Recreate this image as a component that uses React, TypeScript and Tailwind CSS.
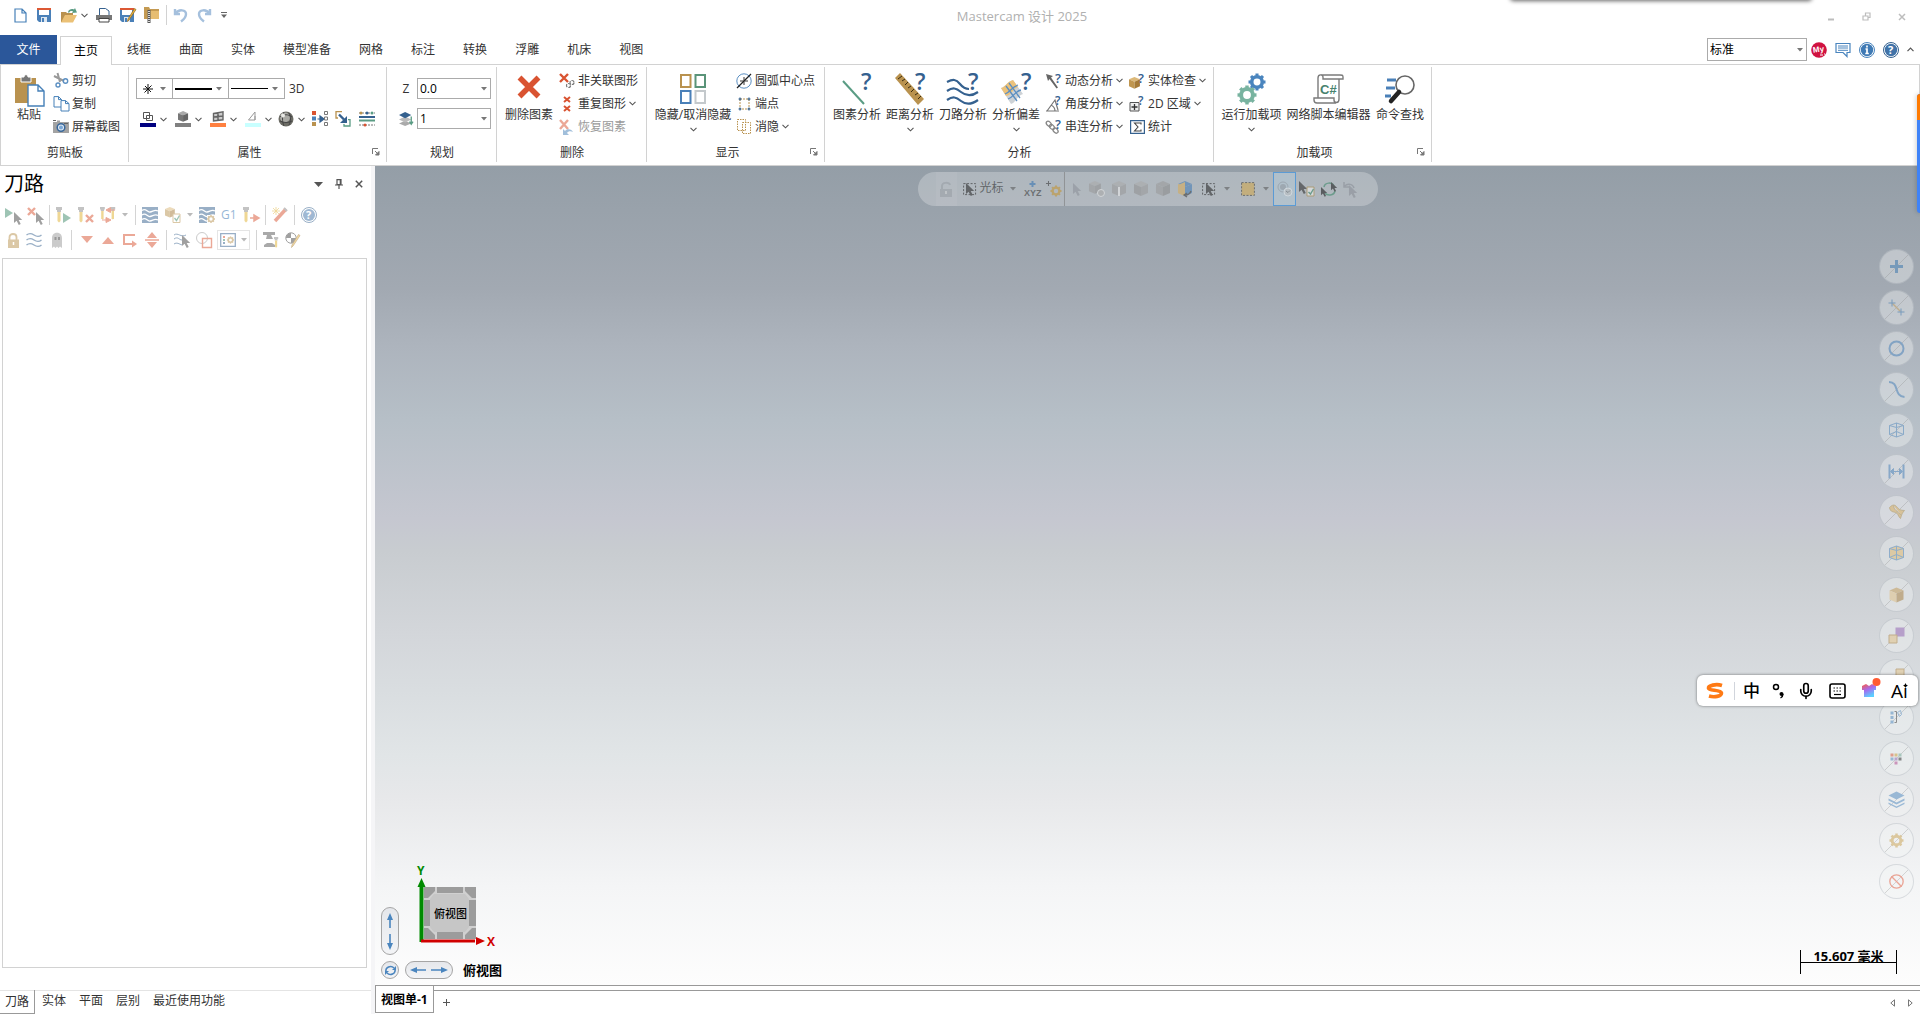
import React from 'react';
import { Ban, Mic } from 'lucide-react';
import clsx from 'clsx';

type SvgProps = { w?: number; h?: number; box?: string; className?: string; children: React.ReactNode };

const Svg = ({ w = 16, h = 16, box, className, children }: SvgProps) => (
  <svg
    width={w}
    height={h}
    viewBox={box ?? `0 0 ${w} ${h}`}
    fill="none"
    aria-hidden="true"
    className={clsx('shrink-0 overflow-visible', className)}
  >
    {children}
  </svg>
);

const Chevron = () => (
  <Svg w={7} h={5}><path d="M.5.8 3.5 3.8 6.5.8" stroke="#555" strokeWidth="1.1" /></Svg>
);

const Caret = ({ color = '#777' }: { color?: string }) => (
  <Svg w={6} h={4}><path d="M0 0h6L3 3.5z" fill={color} /></Svg>
);

const Ask = ({ x, y, size }: { x: number; y: number; size: number }) => (
  <text x={x} y={y} fontSize={size} fontWeight="600" fill="#35618f" fontFamily="Open Sans">?</text>
);

const Gear = ({ x, y, r, color }: { x: number; y: number; r: number; color: string }) => (
  <g transform={`translate(${x} ${y})`} stroke={color}>
    <circle r={r * 0.62} strokeWidth={r * 0.42} />
    {[0, 45, 90, 135, 180, 225, 270, 315].map((a) => (
      <path key={a} d={`M0 ${-r * 0.72}V${-r}`} strokeWidth={r * 0.36} transform={`rotate(${a})`} />
    ))}
  </g>
);

const Arrow = ({ x = 0, y = 0, color = '#444' }: { x?: number; y?: number; color?: string }) => (
  <path transform={`translate(${x} ${y})`} d="M0 0v11l2.6-2.3L4.8 13l1.9-.9L4.7 8h3.5z" fill={color} />
);

const Cube = ({ top = '#999', left = '#888', right = '#777', x = 0, y = 0, s = 1 }) => (
  <g transform={`translate(${x} ${y}) scale(${s})`}>
    <path d="M7 0 14 3 7 6 0 3z" fill={top} />
    <path d="M0 3l7 3v9L0 12z" fill={left} />
    <path d="M14 3 7 6v9l7-3z" fill={right} />
  </g>
);

const Waves = ({ color = '#35618f', w = 16, sw = 1.4 }) => (
  <Svg w={w} h={w} box="0 0 16 16">
    {[3, 8, 13].map((y) => (
      <path key={y} d={`M.5 ${y}c2.5-2 4.5-2 7.5 0s5 2 7.5 0`} stroke={color} strokeWidth={sw} />
    ))}
  </Svg>
);

const Page = ({ w, h }: { w: number; h: number }) => (
  <Svg w={w} h={h} box="0 0 13 15">
    <path d="M1 1h7l4 4v9H1zM8 1v4h4" stroke="#4680b8" strokeWidth="1.2" fill="#fff" />
  </Svg>
);

const Floppy = () => (
  <>
    <path d="M0 1h14v13H2l-2-2z" fill="#4a80b8" />
    <path d="M2 1h10v6H2z" fill="#fff" />
    <path d="M0 0h14v2H0z" fill="#dc5834" />
    <path d="M4 9h6v5H4z" fill="#dce6f0" />
    <path d="M5 10h2v4H5z" fill="#4a80b8" />
  </>
);

const Pencil = () => <path d="M14 1.5 7 12l-1.5 1.5L6 11 12.5.5z" fill="#f0b83c" stroke="#8c6420" strokeWidth=".7" />;

const quickAccess = [
  { name: '新建', icon: <Page w={13} h={15} /> },
  { name: '保存', icon: <Svg w={14} h={15}><Floppy /></Svg> },
  {
    name: '打开',
    icon: (
      <Svg w={17} h={15}>
        <path d="M0 4h5l1 1h6v9H0z" fill="#b9924f" />
        <path d="M4 7h12l-4 7.5H0z" fill="#ebc176" />
        <path d="M7 4c1-3 4-3.5 6-2.5L14 0l2 4.5-5 .5 1-1.5C10 2.5 9 3 8 5z" fill="#5a9c84" />
      </Svg>
    ),
  },
];

const quickAccessMore = [
  {
    name: '打印',
    icon: (
      <Svg w={16} h={15}>
        <path d="M3.5 8V.5h6L13 3v5" stroke="#35618f" fill="#fff" />
        <path d="M0 7h16v5H0z" fill="#777" /><path d="M3 10.500h10V14H3z" fill="#fff" stroke="#444" />
      </Svg>
    ),
  },
  {
    name: '另存为',
    icon: <Svg w={16} h={15}><Floppy /><g transform="translate(2 0)"><Pencil /></g></Svg>,
  },
  {
    name: '压缩',
    icon: (
      <Svg w={15} h={16}>
        <path d="M0 0h5l1 2h9v10H0z" fill="#c49a52" /><path d="M3 4h12v8H3z" fill="#e6bd72" />
        <path d="M5 3v13" stroke="#555" strokeWidth="3" /><path d="M5 4v11" stroke="#fff" strokeWidth="1.5" strokeDasharray="1 1" />
      </Svg>
    ),
  },
];

const tabs = ['线框', '曲面', '实体', '模型准备', '网格', '标注', '转换', '浮雕', '机床', '视图'];

/* ---------- ribbon parts ---------- */

const Group = ({ label, launcher, className, children }: { label: string; launcher?: boolean; className: string; children: React.ReactNode }) => (
  <section className={clsx('relative flex shrink-0 flex-col', className)} aria-label={label}>
    <div className="flex h-[77px] items-start">{children}</div>
    <div className={clsx('text-center', launcher && 'pr-[17px]')}>{label}</div>
    {launcher && (
      <button type="button" aria-label={`${label}选项`} className="absolute right-[7px] bottom-[6px]">
        <Svg w={8} h={8}><path d="M.5 6V.5H6" stroke="#777" /><path d="M3 3l3 3M7 3.5V7H3.5z" stroke="#777" fill="#777" /></Svg>
      </button>
    )}
    <div className="absolute top-0 right-0 h-[95px] w-px bg-[#d2d2d2]" />
  </section>
);

const Big = ({ label, icon, drop, className }: { label: string; icon: React.ReactNode; drop?: boolean; className?: string }) => (
  <button type="button" className={clsx('flex shrink-0 flex-col items-center whitespace-nowrap', className)}>
    <span className="flex h-[39px] items-center justify-center">{icon}</span>
    <span className="h-[19px]">{label}</span>
    {drop && <span className="flex h-2 items-center"><Chevron /></span>}
  </button>
);

type RowItem = { label: string; icon: React.ReactNode; drop?: boolean; off?: boolean };

const Rows = ({ items }: { items: RowItem[] }) => (
  <div className="flex shrink-0 flex-col pt-[2px]">
    {items.map((item) => (
      <button key={item.label} type="button" disabled={item.off} className={clsx('flex h-[23px] items-center gap-[3px] whitespace-nowrap', item.off && 'opacity-50')}>
        <span className="flex w-4 justify-center">{item.icon}</span>
        {item.label}
        {item.drop && <Chevron />}
      </button>
    ))}
  </div>
);

const Combo = ({ label, value, className }: { label: string; value: string; className?: string }) => (
  <span className={clsx('relative flex items-center', className)}>
    <select aria-label={label} className="h-full w-full appearance-none border border-[#ababab] bg-white px-[2px] text-black">
      <option>{value}</option>
    </select>
    <span className="pointer-events-none absolute right-1"><Caret /></span>
  </span>
);

const RedX = ({ s }: { s: number }) => (
  <Svg w={s} h={s} box="0 0 24 24"><path d="M2.5 2.5 21.5 21.5M21.5 2.5 2.5 21.5" stroke="#d95331" strokeWidth="5.5" /></Svg>
);

const clipboardRows: RowItem[] = [
  {
    label: '剪切',
    icon: (
      <Svg w={16} h={15}>
        <path d="M1 3l10 5M4.5 0 7 9" stroke="#999" strokeWidth="2" />
        <circle cx="5" cy="12" r="2" stroke="#5b8fc2" strokeWidth="1.4" /><circle cx="12.5" cy="8" r="2.2" stroke="#5b8fc2" strokeWidth="1.4" />
      </Svg>
    ),
  },
  {
    label: '复制',
    icon: (
      <Svg w={17} h={16}>
        <path d="M1 .6h4.5L8.5 3.5V11H1zM5.5.6v3h3" stroke="#4680b8" fill="#fff" />
        <path d="M8 4.6h4.5l3.5 3V15H8zM12.5 4.6v3H16" stroke="#4680b8" fill="#fff" />
      </Svg>
    ),
  },
  {
    label: '屏幕截图',
    icon: (
      <Svg w={16} h={13}>
        <path d="M0 2h4V.5h3V2h9v11H0z" fill="#a3a3a3" /><path d="M0 0h3v1H0zM11 3h4v1h-4z" fill="#666" />
        <circle cx="8" cy="7.5" r="3.8" fill="#dfe8f2" stroke="#38679a" strokeWidth="1.5" /><circle cx="8" cy="7.5" r="2" fill="#7aa7d6" />
      </Svg>
    ),
  },
];

const colorTools = [
  { name: '线框颜色', bar: 'bg-[#000080]', icon: <path d="M1.5 1.5h6v6h-6zM4.5 4.5h6v5h-6z" stroke="#555" /> },
  { name: '实体颜色', bar: 'bg-[#808080]', icon: <Cube top="#aaa" left="#777" right="#666" x={1} s={0.72} /> },
  { name: '曲面颜色', bar: 'bg-[#ff8040]', icon: <path d="M1.5 2.5 11 .8v8L1.5 10zM6 1.8v7.5M1.5 6 11 5" stroke="#666" strokeWidth="1.4" fill="#ccc" /> },
  { name: '网格颜色', bar: 'bg-[#c8ffff]', icon: <path d="M8 1v8H1.5zM8 5v4" stroke="#999" /> },
];

const deleteRows: RowItem[] = [
  {
    label: '非关联图形',
    icon: (
      <Svg>
        <path d="M1 1l8 8M9 1 1 9" stroke="#d95331" strokeWidth="2.4" />
        <circle cx="9.5" cy="12.5" r="2" stroke="#777" strokeWidth="1.2" strokeDasharray="3 1" /><circle cx="13" cy="9.5" r="2" stroke="#777" strokeWidth="1.2" strokeDasharray="3 1" />
      </Svg>
    ),
  },
  { label: '重复图形', drop: true, icon: <Svg w={8} h={16}><path d="M1 1l6 5M7 1 1 6M1 10l6 5M7 10l-6 5" stroke="#d95331" strokeWidth="2" /></Svg> },
  {
    label: '恢复图素',
    off: true,
    icon: (
      <Svg>
        <path d="M1 1l8 9M9 1 1 10" stroke="#d95331" strokeWidth="2.4" />
        <path d="M4 10v6h6l-2-2c1-2 4-2 6-1-1-3-6-4-8-1z" fill="#4680b8" />
      </Svg>
    ),
  },
];

const displayRows: RowItem[] = [
  {
    label: '圆弧中心点',
    icon: (
      <Svg>
        <circle cx="8" cy="8" r="7.2" stroke="#5b8fc2" /><path d="M8 4v8M4 8h8" stroke="#999" strokeWidth="2" /><path d="M1 15 15 1" stroke="#222" strokeWidth="1.3" />
      </Svg>
    ),
  },
  {
    label: '端点',
    icon: (
      <Svg w={13} h={14}>
        <path d="M2 2h9v10H2z" stroke="#b9924f" strokeDasharray="2 1" />
        <path d="M2 .5v3M.5 2h3M11 .5v3M9.5 2h3M2 10.500v3M.5 12h3M11 10.500v3M9.5 12h3" stroke="#35618f" strokeWidth="1.2" />
      </Svg>
    ),
  },
  { label: '消隐', drop: true, icon: <Svg w={14} h={15}><path d="M.5.5h8v11h-8zM5.5 3.5h8v11h-8z" stroke="#b9924f" strokeDasharray="1.5 1" /></Svg> },
];

const analyzeRowsA: RowItem[] = [
  { label: '动态分析', drop: true, icon: <Svg><path d="M0 1l7 2-2 1.500 7 10-1.500 1L3.500 6 2 8z" fill="#666" /><Ask x={9} y={10} size={13} /></Svg> },
  { label: '角度分析', drop: true, icon: <Svg><path d="M0 15h13M1 15 9 4l3 10M5 9c2 1 4 3 4 6" stroke="#777" strokeWidth="1.2" /><Ask x={9} y={9} size={12} /></Svg> },
  {
    label: '串连分析',
    drop: true,
    icon: (
      <Svg>
        <g stroke="#888" strokeWidth="1.3" transform="rotate(45 6 8)"><ellipse cx="1.5" cy="8" rx="3" ry="2" /><ellipse cx="6" cy="8" rx="3" ry="2" /><ellipse cx="11" cy="8" rx="3" ry="2" /></g>
        <Ask x={9} y={10} size={13} />
      </Svg>
    ),
  },
];

const analyzeRowsB: RowItem[] = [
  { label: '实体检查', drop: true, icon: <Svg><Cube top="#dcb878" left="#c09650" right="#a57a38" y={4} s={0.78} /><Ask x={9} y={10} size={13} /></Svg> },
  { label: '2D 区域', drop: true, icon: <Svg><path d="M1 6.500h9V15H1z" stroke="#555" fill="#eee" /><path d="M5.500 8v6M2.500 11h6" stroke="#333" strokeWidth="1.3" /><Ask x={9} y={9} size={12} /></Svg> },
  {
    label: '统计',
    icon: (
      <Svg w={15} h={14}>
        <path d="M.6.6h13.800v12.800H.6z" stroke="#35618f" strokeWidth="1.2" /><path d="M11 4.500V3H4.500L8 7l-3.500 4H11V9.500" stroke="#444" strokeWidth="1.1" />
      </Svg>
    ),
  },
];

const Ribbon = () => (
  <div className="flex shrink-0 overflow-hidden border border-[#d2d2d2] pt-[2px] pb-[3px]">
    <Group label="剪贴板" className="w-32">
      <Big
        label="粘贴"
        className="ml-3 w-8"
        icon={
          <Svg w={29} h={33} className="mt-2">
            <path d="M0 4h21v25H0z" fill="#b9924f" /><path d="M6 3h3c0-3 4-3 4 0h3v5H6z" fill="#777" stroke="#fff" />
            <path d="M13 11h10l6 6v15H13zM23 11v6h6" stroke="#4680b8" strokeWidth="1.4" fill="#fff" />
          </Svg>
        }
      />
      <div className="ml-2"><Rows items={clipboardRows} /></div>
    </Group>

    <Group label="属性" launcher className="w-[258px]">
      <div className="flex flex-col pt-[11px] pl-[7px]">
        <div className="flex h-[21px] items-center">
          <button type="button" aria-label="点样式" className="flex h-full w-[37px] items-center justify-between border border-[#ababab] px-[6px]">
            <Svg w={10} h={10}><path d="M5 0v10M0 5h10M1.5 8.5l7-7M2 2l6 6" stroke="#111" /></Svg>
            <Caret />
          </button>
          <button type="button" aria-label="线型" className="flex h-full w-14 items-center justify-between border-y border-r border-[#ababab] px-[2px]">
            <span className="h-[2px] w-[37px] bg-black" /><span className="pr-1"><Caret /></span>
          </button>
          <button type="button" aria-label="线宽" className="flex h-full w-14 items-center justify-between border-y border-r border-[#ababab] px-[2px]">
            <span className="h-px w-[37px] bg-black" /><span className="pr-1"><Caret /></span>
          </button>
          <button type="button" className="ml-1">3D</button>
        </div>
        <div className="mt-[11px] flex h-[18px] items-center gap-[6px] pl-1">
          {colorTools.map((tool) => (
            <button key={tool.name} type="button" aria-label={tool.name} className="flex w-[29px] items-center gap-1">
              <span className="flex flex-col items-center">
                <Svg w={12} h={12}>{tool.icon}</Svg>
                <span className={clsx('h-1 w-4', tool.bar)} />
              </span>
              <Chevron />
            </button>
          ))}
          <button type="button" aria-label="材料" className="-ml-[2px] flex items-center gap-1">
            <Svg>
              <circle cx="8" cy="8" r="7.5" fill="#6b6b64" /><circle cx="7" cy="6.5" r="5" fill="#a9a9a4" />
              <path d="M2 6c4-3 8-3 12 0M2 10c4 2 8 2 12 0M6 1c-2 5-2 9 0 14M11 2c2 4 2 8 0 12" stroke="#444" /><circle cx="5" cy="4.5" r="2" fill="#e8e8e4" />
            </Svg>
            <Chevron />
          </button>
          <button type="button" aria-label="设置全部" className="ml-px">
            <Svg w={17}>
              <path d="M0 0h4v4H0z" fill="#d95331" /><path d="M0 5.5h4v4H0z" fill="#4a80b8" /><path d="M0 11h4v4H0z" fill="#b9924f" />
              <path d="M5.5 8H10M8 5l4 3-4 3z" stroke="#35618f" strokeWidth="1.2" fill="#35618f" />
              <path d="M12.5.5h3v3h-3zM12.5 6h3v3h-3zM12.5 11.5h3v3h-3z" stroke="#777" />
            </Svg>
          </button>
          <button type="button" aria-label="匹配属性">
            <Svg w={16}>
              <path d="M7 .7H1V7h2" stroke="#b9924f" strokeWidth="1.3" /><path d="M13 8.7h2V15H9v-2" stroke="#5a9c84" strokeWidth="1.3" />
              <path d="m4 3.500 5 5" stroke="#35618f" strokeWidth="2.4" /><path d="M12 5v7H5z" fill="#35618f" />
            </Svg>
          </button>
          <button type="button" aria-label="线条属性" className="ml-[2px]">
            <Svg w={16}>
              <path d="M0 2h16M0 14h16" stroke="#777" strokeDasharray="2 1" /><path d="M0 6h16" stroke="#35618f" strokeWidth="2" /><path d="M0 9.5h16" stroke="#5a9c84" strokeWidth="2" />
              <circle cx="2" cy="2" r="1.5" fill="#b9924f" /><circle cx="8" cy="2" r="1.5" fill="#35618f" /><circle cx="13" cy="2" r="1.5" fill="#5a9c84" /><circle cx="6" cy="14" r="1.5" fill="#d95331" />
            </Svg>
          </button>
        </div>
      </div>
    </Group>

    <Group label="规划" className="w-[110px]">
      <div className="flex flex-col gap-[9px] pt-[11px] pl-3">
        <div className="flex h-[21px] items-center">
          <span className="w-[18px] pr-1 text-center">Z</span>
          <Combo label="Z 深度" value="0.0" className="h-full w-[74px]" />
        </div>
        <div className="flex h-[21px] items-center">
          <span className="w-[18px]">
            <Svg w={14} h={14} box="0 0 16 16">
              <path d="M7 10 0 13l7 3 7-3z" fill="#aaa" /><path d="M7 5 0 8.5 7 12l7-3.500z" fill="#bbb" /><path d="M7 0 0 3.5 7 7l7-3.500z" fill="#35618f" />
              <path d="M14 5v9M12 11l2 3 2-3" stroke="#5a9c84" strokeWidth="1.5" />
            </Svg>
          </span>
          <Combo label="层别" value="1" className="h-full w-[74px]" />
        </div>
      </div>
    </Group>

    <Group label="删除" className="w-[150px]">
      <Big label="删除图素" icon={<RedX s={24} />} className="ml-2 w-12" />
      <div className="ml-[6px]"><Rows items={deleteRows} /></div>
    </Group>

    <Group label="显示" launcher className="w-[178px]">
      <Big
        label="隐藏/取消隐藏"
        drop
        className="ml-[7px] w-[78px]"
        icon={
          <Svg w={26} h={30} className="mt-1">
            <path d="M1 1h9.5v12H1z" stroke="#b9924f" strokeWidth="2" /><path d="M15.5 1H25v12h-9.500z" stroke="#5a9479" strokeWidth="2" />
            <path d="M1 17h9.500v12H1z" stroke="#4a80b8" strokeWidth="2" /><path d="M15.500 17H25v12h-9.500z" stroke="#c4c9cc" strokeWidth="2" />
          </Svg>
        }
      />
      <div className="ml-1"><Rows items={displayRows} /></div>
    </Group>

    <Group label="分析" className="w-[389px]">
      <div className="flex gap-[5px] pl-2">
        <Big label="图素分析" className="w-12" icon={<Svg w={32} h={32} className="mt-1"><path d="M2 8 23 31" stroke="#5a9c84" strokeWidth="2" /><Ask x={20} y={17} size={23} /></Svg>} />
        <Big
          label="距离分析"
          drop
          className="w-12"
          icon={
            <Svg w={32} h={32} className="mt-1">
              <path d="M1 5 6 0l24 26-6 6z" fill="#b9924f" /><path d="M8 3 4 6m7 0-3 2m6 1-3 3m6 1-3 2m6 1-3 3m7 1-3 2m6 1-3 3" stroke="#3a2c10" />
              <Ask x={21} y={17} size={23} />
            </Svg>
          }
        />
        <Big
          label="刀路分析"
          className="w-12"
          icon={
            <Svg w={34} h={32} className="mt-1">
              <path d="M1 9c6-3 9-3 13 2s8 5 9 5M1 18c6-4 9-3 14 1s10 5 17 0M1 27c6-4 9-3 14 1s10 4 17-1" stroke="#35618f" strokeWidth="2.2" />
              <Ask x={22} y={17} size={23} />
            </Svg>
          }
        />
        <Big
          label="分析偏差"
          drop
          className="w-12"
          icon={
            <Svg w={33} h={32} className="mt-1">
              <path d="M1 15c5-1 5-6 12-8l10 14c-6 2-7 8-12 10z" fill="#cdd2d6" /><path d="M1 15c5-1 5-6 12-8l5 7c-6 2-6 8-12 9z" fill="#ecc27a" />
              <path d="M5 21c6-2 6-7 13-9M8 26c6-2 7-8 13-9M6 13l11 15M9 10l11 15" stroke="#5b8fc2" strokeWidth="1.3" />
              <Ask x={21} y={17} size={23} />
            </Svg>
          }
        />
        <div className="ml-px flex gap-[6px]">
          <Rows items={analyzeRowsA} />
          <Rows items={analyzeRowsB} />
        </div>
      </div>
    </Group>

    <Group label="加载项" launcher className="w-[218px]">
      <div className="flex gap-1 pl-[7px]">
        <Big label="运行加载项" drop className="w-[61px]" icon={<Svg w={30} h={32} className="mt-1"><Gear x={20} y={9} r={8.5} color="#4a85be" /><Gear x={10} y={22} r={9.5} color="#78b3a0" /></Svg>} />
        <Big
          label="网络脚本编辑器"
          className="w-[85px]"
          icon={
            <Svg w={31} h={30} className="mt-1">
              <path d="M5 24V4c0-4 5-4 5-1v2h20V3c0-2-1-2-3-2H8M26 5v20c0 5-5 4-5 1v-2H1v2c0 2 1 3 3 3h19" stroke="#7b7b7b" strokeWidth="1.4" />
              <text x="7" y="20" fontSize="13" fontWeight="700" fill="#47836e" fontFamily="Liberation Sans">C#</text>
            </Svg>
          }
        />
        <Big
          label="命令查找"
          className="w-[50px]"
          icon={
            <Svg w={30} h={30} className="mt-1">
              <path d="M2 6h9M1 14h9M0 22h6" stroke="#4a80b8" strokeWidth="3" />
              <circle cx="20" cy="11" r="9" stroke="#666" strokeWidth="1.6" fill="#fff" /><path d="m14 18-8 9" stroke="#222" strokeWidth="4.5" strokeLinecap="round" />
            </Svg>
          }
        />
      </div>
    </Group>
  </div>
);

const Header = () => (
  <header className="shrink-0">
    <div className="relative flex h-[35px] items-start justify-between">
      <div className="flex h-[30px] shrink-0 items-center pl-[14px]">
        <div className="flex items-center gap-[10px]">
          {quickAccess.map((q) => <button key={q.name} type="button" aria-label={q.name}>{q.icon}</button>)}
        </div>
        <button type="button" aria-label="最近文件" className="mr-2 ml-[3px]"><Chevron /></button>
        <div className="flex items-center gap-2">
          {quickAccessMore.map((q) => <button key={q.name} type="button" aria-label={q.name}>{q.icon}</button>)}
        </div>
        <span className="mx-[7px] h-5 w-px bg-[#d2d2d2]" />
        <button type="button" aria-label="撤销"><Svg w={14} h={14}><path d="M1 1v5h5M1.5 5.5C5 .5 12 2 12 6c0 4-3 6-5 7.500" stroke="#a5c0dd" strokeWidth="2.4" /></Svg></button>
        <button type="button" aria-label="重做" className="ml-[9px]"><Svg w={14} h={14}><path d="M13 1v5H8M12.5 5.5C9 .5 2 2 2 6c0 4 3 6 5 7.500" stroke="#a5c0dd" strokeWidth="2.4" /></Svg></button>
        <button type="button" aria-label="自定义" className="ml-[10px]"><Svg w={6} h={6}><path d="M0 .5h6" stroke="#666" /><path d="M0 2.500h6L3 6z" fill="#666" /></Svg></button>
      </div>
      <h1 className="flex-1 pr-[10px] text-center text-[13px] leading-[33px] whitespace-nowrap text-[#b0b0b0]">Mastercam 设计 2025</h1>
      <div className="flex h-[33px] items-center gap-[27px] pr-[14px] text-[#bdbdbd]">
        <button type="button" aria-label="最小化"><Svg w={8} h={8}><path d="M1 6.500h6" stroke="currentColor" strokeWidth="2" /></Svg></button>
        <button type="button" aria-label="还原"><Svg w={9} h={9}><path d="M1 4h5v4H1zM3.500 4V1H8v4.500H6" stroke="currentColor" strokeWidth="1.2" /></Svg></button>
        <button type="button" aria-label="关闭"><Svg w={8} h={8}><path d="m1 1 6 6M7 1 1 7" stroke="currentColor" strokeWidth="1.5" /></Svg></button>
      </div>
      <div className="absolute -top-2 right-[108px] h-2 w-[302px] rounded-b bg-gray-300 shadow-[0_1px_4px_rgba(0,0,0,.6)]" />
    </div>

    <div className="flex h-[29px] items-stretch">
      <button type="button" className="mr-[3px] w-[57px] bg-[#2b579a] text-white">文件</button>
      <button type="button" className="relative z-10 mt-px mr-px -mb-px border border-b-0 border-[#d2d2d2] bg-white px-[13px] text-black">主页</button>
      {tabs.map((t) => <button key={t} type="button" className="px-[14px] whitespace-nowrap">{t}</button>)}
      <div className="ml-auto flex items-center gap-2 pr-[5px]">
        <Combo label="界面配置" value="标准" className="mr-[-4px] h-[23px] w-[100px]" />
        <button type="button" aria-label="My Mastercam">
          <Svg><circle cx="8" cy="8" r="7.8" fill="#d01240" /><text x="2" y="10" fontSize="8" fontWeight="700" fill="#fff" fontFamily="Liberation Sans" transform="rotate(-8 8 8)">My</text><path d="M9 13h3M13 12h1" stroke="#fff" /></Svg>
        </button>
        <button type="button" aria-label="反馈"><Svg><path d="M1 1.500h14v9h-3v4l-4-4H1z" stroke="#4a85be" strokeWidth="1.2" /><path d="M3 4h10M3 6h10M3 8.300h10" stroke="#4a85be" /></Svg></button>
        <button type="button" aria-label="信息"><Svg><circle cx="8" cy="8" r="7.5" stroke="#4a85be" /><circle cx="8" cy="8" r="6.2" fill="#3f7ab5" /><path d="M8 3.500v2M6.500 7H8v4.500M6.300 11.500h3.500" stroke="#fff" strokeWidth="1.7" /></Svg></button>
        <button type="button" aria-label="帮助"><Svg><circle cx="8" cy="8" r="7.5" stroke="#35618f" /><circle cx="8" cy="8" r="6.2" fill="#4173a8" /><text x="5" y="12" fontSize="11" fontWeight="700" fill="#fff" fontFamily="Open Sans">?</text></Svg></button>
        <button type="button" aria-label="折叠功能区" className="pr-px"><Svg w={7} h={5}><path d="M.5 4.200 3.500 1.200 6.500 4.200" stroke="#555" strokeWidth="1.2" /></Svg></button>
      </div>
    </div>
    <Ribbon />
  </header>
);

/* ---------- toolpath manager ---------- */

const Tool = ({ x = 0 }: { x?: number }) => (
  <g transform={`translate(${x} 0)`}><path d="M0 0h6v3H5v2H1V3H0z" fill="#888" /><path d="M1.500 5h3v9l-1.500 1.500L1.500 14z" fill="#e0b02c" /></g>
);

const WaveBlock = ({ gear }: { gear?: boolean }) => (
  <Svg>
    <path d="M0 0h16v16H0z" fill="#35618f" />
    <path d="M0 3.500c4-3 5 2 8 1.500s5-3 8-1M0 8c4-3 5 2 8 1.500S13 6.500 16 8.500M0 12.500c4-3 5 2 8 1.500s5-3 8-1" stroke="#fff" strokeWidth="1.3" />
    {gear && <><path d="M8 8h8v8H8z" fill="#fff" /><Gear x={12} y={12} r={4} color="#b9924f" /></>}
  </Svg>
);

const Split = () => <span className="h-5 w-px bg-[#aaa]" />;

const PanelButton = ({ name, children, className }: { name: string; children: React.ReactNode; className?: string }) => (
  <button type="button" aria-label={name} className={clsx('flex shrink-0 items-center', className)}>{children}</button>
);

const ToolpathPanel = () => (
  <aside className="flex w-[371px] shrink-0 flex-col">
    <div className="flex h-9 items-center justify-between pr-2 pl-1">
      <h2 className="text-[20px] leading-9 text-black">刀路</h2>
      <div className="flex items-center gap-3">
        <button type="button" aria-label="菜单"><Svg w={9} h={5}><path d="M0 0h9L4.500 5z" fill="#555" /></Svg></button>
        <button type="button" aria-label="固定"><Svg w={8} h={10}><path d="M2 .6h4v5H2zM5.300 1v4M0 6h8M4 6v4" stroke="#555" strokeWidth="1.2" /></Svg></button>
        <button type="button" aria-label="关闭面板"><Svg w={8} h={8}><path d="m.8.8 6.400 6.400M7.200.8.8 7.200" stroke="#555" strokeWidth="1.5" /></Svg></button>
      </div>
    </div>
    <div className="flex h-[26px] items-center gap-[6px] pl-[5px] opacity-50">
      <PanelButton name="选择全部"><Svg w={16}><path d="M0 1v10l8-5z" fill="#3f8a6c" /><Arrow x={9} y={5} /></Svg></PanelButton>
      <PanelButton name="取消选择"><Svg w={16}><path d="m1 1 7 7M8 1 1 8" stroke="#d95331" strokeWidth="2.4" /><Arrow x={9} y={5} /></Svg></PanelButton>
      <Split />
      <PanelButton name="重新生成"><Svg w={16}><Tool /><path d="M7 6v10l8-5z" fill="#3f8a6c" /></Svg></PanelButton>
      <PanelButton name="删除刀路"><Svg w={16}><Tool /><path d="m8 8 7 7M15 8l-7 7" stroke="#d95331" strokeWidth="2.4" /></Svg></PanelButton>
      <PanelButton name="移动" className="mr-px gap-[6px]">
        <Svg w={16}><g transform="scale(.8)"><Tool /><Tool x={13} /></g><path d="M9 3h6M10.500.500v5L6 3zM2 13h5M6 10.500v5l5-2.500z" stroke="#d95331" fill="#d95331" /></Svg>
        <Caret />
      </PanelButton>
      <Split />
      <PanelButton name="刀路模拟"><WaveBlock /></PanelButton>
      <PanelButton name="实体验证" className="ml-px gap-[6px]">
        <Svg w={16}><Cube top="#dcb878" left="#b9924f" right="#a57a38" s={0.7} /><path d="M8 7h7v8.500H8z" stroke="#b9924f" fill="#fff" /><path d="m9.500 11 2 2.500 3-5" stroke="#3f8a6c" strokeWidth="1.3" /></Svg>
        <Caret />
      </PanelButton>
      <PanelButton name="后处理设置"><WaveBlock gear /></PanelButton>
      <PanelButton name="后处理" className="text-[12px] text-[#2f70b0]">G1</PanelButton>
      <PanelButton name="省时高效加工"><Svg w={16}><Tool /><path d="M7 11h5M11 8v6l5-3z" stroke="#d95331" fill="#d95331" strokeWidth="1.5" /></Svg></PanelButton>
      <Split />
      <PanelButton name="向导"><Svg w={16}><path d="M3 14 14 2" stroke="#d95331" strokeWidth="3.5" /><path d="m12 1 3 3" stroke="#888" strokeWidth="2" /><path d="M4 0v8M0 4h8M1 1l6 6M7 1 1 7" stroke="#e0b02c" strokeWidth=".8" /></Svg></PanelButton>
      <Split />
      <PanelButton name="面板帮助"><Svg><circle cx="8" cy="8" r="7.5" stroke="#35618f" /><circle cx="8" cy="8" r="6" fill="#4173a8" /><text x="5" y="12" fontSize="11" fontWeight="700" fill="#fff" fontFamily="Open Sans">?</text></Svg></PanelButton>
    </div>
    <div className="flex h-6 items-center gap-[6px] pl-[6px] opacity-50">
      <PanelButton name="锁定"><Svg w={14} h={15}><path d="M3.500 7V4c0-4 7-4 7 0v3" stroke="#b9924f" strokeWidth="1.8" /><path d="M2 6.500h11V15H2z" fill="#b9924f" /><path d="M7.500 9v3" stroke="#fff" strokeWidth="1.5" /></Svg></PanelButton>
      <PanelButton name="显示刀路"><Waves /></PanelButton>
      <PanelButton name="隐藏选择" className="ml-px"><Svg w={16}><path d="M3 16V6c0-7 10-7 10 0v10l-2-1.500L9.500 16 8 14.500 6.500 16 5 14.500z" fill="#999" /><path d="M5.500 5h2v3h-2zM9 5h2v3H9z" fill="#333" /></Svg></PanelButton>
      <Split />
      <PanelButton name="下移" className="ml-[2px]"><Svg w={14}><path d="M1 4h12L7 11z" fill="#d95331" /></Svg></PanelButton>
      <PanelButton name="上移"><Svg w={16}><path d="M2 12h12L8 5z" fill="#d95331" /></Svg></PanelButton>
      <PanelButton name="插入位置"><Svg w={16}><path d="M13 3H2v9h8" stroke="#d95331" strokeWidth="2" /><path d="M10 8.500v7l5-3.500z" fill="#d95331" /></Svg></PanelButton>
      <PanelButton name="滚动"><Svg w={16}><path d="M1 8h14" stroke="#d95331" strokeWidth="1.5" /><path d="M3 6h10L8 0zM3 10h10l-5 6z" fill="#d95331" /></Svg></PanelButton>
      <Split />
      <PanelButton name="仅显示已选" className="ml-px"><Svg w={16}><path d="M0 3c4-3 7 3 12 0M0 7c4-3 5 1 8 1M0 12c3-2 5 0 8 1" stroke="#35618f" /><Arrow x={8} y={3} /></Svg></PanelButton>
      <PanelButton name="仅显示关联"><Svg w={16}><circle cx="6" cy="6" r="5.5" stroke="#999" /><path d="M6.500 6.500h9V15.500h-9z" stroke="#d95331" strokeWidth="1.4" /></Svg></PanelButton>
      <PanelButton name="显示选项" className="-ml-px h-5 gap-[5px] border border-[#ccc] px-[2px]">
        <Svg w={16} h={14}><path d="M.7.7h14.600v12.600H.7z" stroke="#35618f" strokeWidth="1.3" /><path d="M3 3h2v2H3z" fill="#d95331" /><path d="M3 6h2v2H3z" fill="#3f8a6c" /><path d="M3 9h2v2H3z" fill="#35618f" /><Gear x={10.5} y={7} r={3.6} color="#b9924f" /></Svg>
        <Caret />
      </PanelButton>
      <Split />
      <PanelButton name="机床"><Svg w={16}><path d="M0 0h12v3H8l2 4H3l1-4H0zM1 15h11v-2l-3-2H4l-3 2z" fill="#555" /><g transform="translate(11 5) scale(.7)"><Tool /></g></Svg></PanelButton>
      <PanelButton name="编辑"><Svg w={17}><circle cx="6" cy="6" r="5.2" stroke="#444" /><path d="M6 1v5H1c0-3 2-5 5-5zM6 6h5c0 3-2 5-5 5z" fill="#444" /><g transform="translate(1 2)"><Pencil /></g></Svg></PanelButton>
    </div>
    <div className="mt-[6px] mr-1 ml-[2px] flex-1 border border-[#d2d2d2]" />
    <nav className="mt-[22px] flex h-6 border-t border-[#e4e4e4]">
      <button type="button" className="-mt-px border border-l-0 border-t-0 border-[#999] px-[5px] pt-px pb-px">刀路</button>
      {['实体', '平面', '层别', '最近使用功能'].map((t) => (
        <button key={t} type="button" className="ml-px px-[6px] pb-[3px]">{t}</button>
      ))}
    </nav>
  </aside>
);

/* ---------- graphics view ---------- */

const SelectionBar = () => (
  <div className="absolute top-[6px] left-1/2 flex h-[34px] -translate-x-1/2 items-center rounded-full bg-white/25 pr-[19px] pl-[18px]">
    <div className="flex h-full items-center opacity-55">
      <PanelButton name="锁定选择" className="mr-[6px] h-full bg-white/10 px-1"><Svg w={13} h={15}><path d="M2 7V4c0-4 7-4 8-1" stroke="#9a9fa6" strokeWidth="2" /><path d="M0 7h12v8H0z" fill="#9a9fa6" /><path d="M6 9v3" stroke="#ddd" strokeWidth="1.5" /></Svg></PanelButton>
      <PanelButton name="光标选择" className="gap-[3px] text-[#222]">
        <Svg w={14} h={14}><path d="M.6 1.600h12v11h-12z" stroke="#222" strokeDasharray="2 1.5" /><Arrow x={3} y={1} color="#222" /></Svg>
        <span className="pb-[2px]">光标</span>
      </PanelButton>
      <span className="ml-[6px]"><Caret color="#555" /></span>
      <PanelButton name="输入坐标" className="ml-2"><Svg w={17}><path d="M8.500 0v6M5.500 3h6" stroke="#2f70b0" strokeWidth="2" /><text x="0" y="15" fontSize="9" fontWeight="600" fill="#333" fontFamily="Liberation Sans">XYZ</text></Svg></PanelButton>
      <PanelButton name="捕捉设置" className="ml-[5px]"><Svg w={16}><path d="M2.500 0v5M0 2.500h5" stroke="#333" /><Gear x={10} y={10} r={5.5} color="#c4922c" /></Svg></PanelButton>
      <span className="mx-[2px] h-full w-px bg-[#777]" />
      <div className="flex items-center gap-[6px] pl-1">
        <PanelButton name="选择"><Svg w={12} h={14}><Arrow x={2} y={1} color="#8b9098" /></Svg></PanelButton>
        <PanelButton name="实体选择"><Svg w={16}><Cube top="#aaa" left="#999" right="#909090" s={0.85} /><circle cx="12" cy="12" r="3.5" fill="#aaa" stroke="#eee" /></Svg></PanelButton>
        <PanelButton name="边缘选择"><Svg w={16}><Cube top="#aaa" left="#999" right="#999" x={1} /><path d="M8 6v9" stroke="#eee" strokeWidth="2" /></Svg></PanelButton>
        <PanelButton name="面选择"><Svg w={16}><Cube top="#aaa" left="#909090" right="#999" x={1} /></Svg></PanelButton>
        <PanelButton name="主体选择"><Svg w={16}><Cube top="#999" left="#999" right="#888" x={1} /></Svg></PanelButton>
        <PanelButton name="背面选择"><Svg w={17}><Cube top="#3f7ab5" left="#e0b050" right="#3f7ab5" x={1} /><path d="m8 1-7 3v8l7 3z" fill="#d8ab55" /><path d="M14 10c-1 3-3 4-6 4m2-2-3 2 3 2" stroke="#333" strokeWidth="1.3" /></Svg></PanelButton>
      </div>
      <PanelButton name="选择方式" className="ml-2"><Svg w={14} h={14}><path d="M.6 1.600h12v11h-12z" stroke="#222" strokeDasharray="2 1.5" /><Arrow x={4} y={1} color="#222" /></Svg></PanelButton>
      <span className="ml-2"><Caret color="#555" /></span>
      <PanelButton name="窗口选择" className="ml-[11px]"><Svg w={14} h={14}><path d="M.6.6h12.800v12.800H.6z" fill="#d2a748" stroke="#333" strokeDasharray="2 1.5" /></Svg></PanelButton>
      <span className="ml-2"><Caret color="#555" /></span>
    </div>
    <PanelButton name="选择验证" className="ml-1 h-full border border-[#5b9bd5] bg-sky-200/20 px-[3px]">
      <Svg w={15} className="opacity-50"><circle cx="6" cy="6" r="5" stroke="#8b9098" /><circle cx="6" cy="6" r="3" fill="#8b9098" /><circle cx="11" cy="11" r="4" fill="#bbb" stroke="#eee" /><path d="M9 10l2 1.500 2-2" stroke="#555" /></Svg>
    </PanelButton>
    <div className="flex items-center gap-[5px] pl-[3px] opacity-60">
      <PanelButton name="选择清单"><Svg w={17}><Arrow color="#333" /><path d="M8 6h7v9H8z" stroke="#a98b4a" fill="#eee" /><path d="m9.500 11 2 2 3-5" stroke="#3f8a6c" strokeWidth="1.4" /></Svg></PanelButton>
      <PanelButton name="反选"><Svg w={17}><path d="M3 6c1-5 8-5 10-1M14 10c-1 5-8 5-10 2" stroke="#3f8a6c" strokeWidth="1.5" /><g transform="translate(0 6) scale(.75)"><Arrow color="#222" /></g><g transform="translate(10 1) scale(.75)"><Arrow color="#222" /></g></Svg></PanelButton>
      <PanelButton name="取消选择全部"><Svg w={16}><path d="M1 1v5h5M1.500 5C5 2 10 3 11 7" stroke="#8b9098" strokeWidth="1.5" /><Arrow x={6} y={4} color="#8b9098" /></Svg></PanelButton>
    </div>
  </div>
);

const boxWire = <path d="M2 4 9 1.500 16 4v9l-7 2.500L2 13zM2 4l7 2 7-2M9 6v9.500M2 13l7-3 7 3M9 1.500V10" stroke="#4680b8" />;

const quickMasks = [
  { name: '点', icon: <path d="M9 2.500v13M2.500 9h13" stroke="#2f6faa" strokeWidth="3" /> },
  { name: '直线', icon: <><path d="m5 5 8 8" stroke="#b9924f" strokeWidth="1.5" /><path d="M4.500 1v7M1 4.500h7M13.500 10v7M10 13.500h7" stroke="#2f6faa" /></> },
  { name: '圆弧', icon: <circle cx="9" cy="9" r="7" stroke="#3f7ab5" strokeWidth="2" /> },
  { name: '曲线', icon: <path d="M1.500 1.500C12 1.500 6 16 17 16.500" stroke="#3f7ab5" strokeWidth="2" /> },
  { name: '线框', icon: boxWire },
  { name: '标注', icon: <><path d="M2 2v14M16 2v14" stroke="#3f7ab5" strokeWidth="2" /><path d="M4 9h10M3 9l3-3v6zM15 9l-3-3v6z" stroke="#3f7ab5" fill="#3f7ab5" /></> },
  { name: '曲面', icon: <path d="M2 4c3-3 5-3 7-1 2 3 4 4 8 4-2 2-3 4-4 8-3-3-2-5-5-6-2-1-5 0-6-5zM6 2c0 4 4 6 8 10" fill="#d8ab55" stroke="#a98b4a" /> },
  { name: '实体线框', icon: <><path d="M2 4 9 1.500 16 4v9l-7 2.500L2 13z" fill="#e0b86a" />{boxWire}</> },
  { name: '实体', icon: <Cube top="#c09650" left="#e0be80" right="#a57a38" x={2} y={2} /> },
  { name: '群组', icon: <><path d="M8 1h9v9H8z" fill="#8f5fb0" /><path d="M1.500 8.500h8v8h-8z" fill="#e0be80" stroke="#a57a38" /></> },
  { name: '结果', icon: <path d="M8.500 1.500h8v8h-8z" fill="#e0be80" stroke="#a57a38" /> },
  { name: '命名群组', icon: <><path d="M3 3h3v3H3zM3 7.500h3v3H3zM3 12h3v3H3z" fill="#4a85be" /><path d="M7 3h2v11H7" stroke="#333" /><path d="M10 4l3-2 1 4-2 2z" stroke="#4a85be" /></> },
  {
    name: '颜色',
    icon: (
      <>
        <path d="M3 4h3v3H3z" fill="#d95331" /><path d="M7 4h3v3H7z" fill="#c99a2e" /><path d="M11 4h3v3h-3z" fill="#6aa590" />
        <path d="M3 8h3v3H3z" fill="#4a85be" /><path d="M7 8h3v3H7z" fill="#8d5fb0" /><path d="M11 8h3v3h-3z" fill="#222" /><path d="M7 12h3v3H7z" fill="#b0408a" />
      </>
    ),
  },
  { name: '层别', icon: <path d="m9 1 8 4-8 4-8-4zM1 8l8 4 8-4v2l-8 4-8-4zM1 12l8 4 8-4v1.500l-8 4-8-4z" fill="#4a85be" /> },
  { name: '设置', icon: <Gear x={9} y={9} r={7} color="#c9a04e" /> },
  { name: '清除', icon: <Ban x={1} y={1} width={16} height={16} color="#e2583a" /> },
];

const MaskBar = () => (
  <div className="absolute top-[83px] right-[6px] flex flex-col gap-[6px]">
    {quickMasks.map((m) => (
      <button key={m.name} type="button" aria-label={m.name} className="flex size-[35px] items-center justify-center rounded-full border border-gray-500/20 bg-gray-100/40">
        <Svg w={33} h={33} className="opacity-50">
          <path d="M5 28 28 5" stroke="#888" strokeOpacity=".6" />
          <g transform="translate(7.5 7.5)">{m.icon}</g>
        </Svg>
      </button>
    ))}
  </div>
);

const spinner = 'absolute rounded-full border border-[#a5a5a5] bg-gradient-to-b from-gray-200 to-gray-100 flex items-center justify-center';

const ViewGizmo = () => (
  <div className="absolute bottom-[6px] left-[6px] h-[120px] w-[130px] text-black">
    <button type="button" aria-label="垂直旋转" className={clsx(spinner, 'bottom-6 left-0 h-12 w-[18px]')}>
      <Svg w={8} h={38}><path d="M4 5v11M4 22v12" stroke="#4a85be" strokeWidth="1.6" /><path d="M4 1 1 8h6zM4 38l-3-7h6z" fill="#4a85be" /></Svg>
    </button>
    <button type="button" aria-label="旋转" className={clsx(spinner, 'bottom-0 left-0 size-[18px]')}>
      <Svg w={13} h={13}><path d="M2 8C1 3 7 1 10 4M11 5c1 5-5 7-8 4" stroke="#4a85be" strokeWidth="1.6" /><path d="M12 2v4H8zM1 11V7h4z" fill="#4a85be" /></Svg>
    </button>
    <button type="button" aria-label="水平旋转" className={clsx(spinner, 'bottom-0 left-6 h-[18px] w-12')}>
      <Svg w={38} h={8}><path d="M5 4h11M21 4h12" stroke="#4a85be" strokeWidth="1.6" /><path d="m0 4 7-3v6zM38 4l-7-3v6z" fill="#4a85be" /></Svg>
    </button>
    <span className="absolute bottom-0 left-[82px] text-[13px] leading-[18px] font-bold whitespace-nowrap">俯视图</span>
    <svg width="94" height="90" viewBox="0 0 94 90" className="absolute bottom-[28px] left-[30px]" aria-hidden="true">
      <path d="M13 26h52v52H13z" fill="#d0d0d0" />
      <path d="M13 26h11v4l-7 7h-4zM54 26h11v11h-4l-7-7zM13 78V67h4l7 7v4zM65 78V67h-4l-7 7v4zM26 26h26v6H26zM26 71h26v7H26zM13 39h6v26h-6zM58 39h7v26h-7z" fill="#9c9c9c" />
      <path d="M23 33h31l4 5v28l-4 5H23l-4-5V38z" fill="#c6c6c6" />
      <path d="M10.5 81V25" stroke="#008a00" strokeWidth="4" /><path d="m10.5 17 4 9h-8z" fill="#008a00" />
      <path d="M10 80h54" stroke="#d00000" strokeWidth="3" /><path d="m74 80-9-4v8z" fill="#d00000" />
      <text x="6" y="14" fontSize="12" fontWeight="700" fill="#008a00" fontFamily="Open Sans">Y</text>
      <text x="76" y="85" fontSize="12" fontWeight="700" fill="#d00000" fontFamily="Open Sans">X</text>
      <text x="23" y="57" fontSize="11" fontWeight="500" fill="#000" fontFamily="Noto Sans CJK SC">俯视图</text>
    </svg>
  </div>
);

const ImeBar = () => (
  <div className="absolute top-[509px] right-[2px] flex h-[31px] w-[221px] items-center rounded-md bg-white pr-[7px] pl-[9px] text-black shadow-[0_0_3px_rgba(0,0,0,.5)]">
    <Svg w={18} h={16}><path d="M16 2.500C10 .5 2 2.500 2.500 5.500 3 8 15 6.500 15.500 10 15.500 13.500 8 14.500 3 13" stroke="#ff7a14" strokeWidth="3.6" /></Svg>
    <span className="ml-[10px] h-[18px] w-px bg-gray-300" />
    <button type="button" className="ml-2 text-[17px] leading-5 font-medium">中</button>
    <button type="button" aria-label="标点" className="ml-3"><Svg w={12} h={16}><circle cx="4" cy="4" r="2.5" stroke="#000" strokeWidth="1.5" /><circle cx="9.5" cy="11" r="2" fill="#000" /><path d="M11 11c0 2-.5 3-2.500 4" stroke="#000" strokeWidth="1.3" /></Svg></button>
    <button type="button" aria-label="语音" className="ml-[13px]"><Mic size={18} strokeWidth={2.2} /></button>
    <button type="button" aria-label="键盘" className="ml-[14px]">
      <Svg w={17}><rect x="1" y="1" width="15" height="14" rx="2" stroke="#000" strokeWidth="1.6" /><path d="M4.500 5h8M4.500 8h8" stroke="#000" strokeWidth="1.2" strokeDasharray="1.4 1.6" /><path d="M5 11.500h7" stroke="#000" strokeWidth="1.2" /></Svg>
    </button>
    <button type="button" aria-label="皮肤" className="mb-[5px] ml-[15px]">
      <Svg w={20} h={20}>
        <defs><linearGradient id="shirt" x1="0" y1="0" x2=".5" y2="1"><stop stopColor="#ff5a3c" /><stop offset=".5" stopColor="#a36bf0" /><stop offset="1" stopColor="#5ad0ff" /></linearGradient></defs>
        <path d="m1 8 4-2 3 2 3-2 4 2v4h-2v7H3v-7H1z" fill="url(#shirt)" /><circle cx="15.5" cy="4" r="4" fill="#ff5a32" />
      </Svg>
    </button>
    <button type="button" className="relative ml-[10px] text-[19px] leading-6">Ai<Svg w={5} h={5} className="absolute top-1 right-0"><path d="m2.500 0 .8 1.700 1.700.8-1.700.8-.8 1.700-.8-1.700L0 2.500l1.700-.8z" fill="#000" /></Svg></button>
  </div>
);

const GraphicsView = () => (
  <main className="flex min-w-0 flex-1 flex-col">
    <div className="relative flex-1 bg-[linear-gradient(#949ea7,#a2a9b2_15%,#adb4bd_22%,#b6bfc7_31%,#c5c7d0_43%,#c8ccd0_47%,#d3d6da_57%,#d9dde0_64%,#e1e5e7_72%,#e7e8ea_77%,#f4f5f6_88%,#fdfdfd)]">
      <SelectionBar />
      <MaskBar />
      <ImeBar />
      <ViewGizmo />
      <div className="absolute right-[23px] bottom-[11px] h-6 w-[97px] border-x border-black text-center text-black">
        <div className="h-[13px] border-b border-black text-[13px] leading-3 font-bold whitespace-nowrap">15.607 毫米</div>
      </div>
    </div>
    <div className="flex h-[29px] items-start border-t border-[#999]">
      <button type="button" className="h-[27px] border border-t-0 border-[#999] px-[5px] pt-[2px] font-bold whitespace-nowrap text-black">视图单-1</button>
      <div className="mt-1 flex h-6 flex-1 items-center justify-between border-t border-[#999] pr-[7px] pl-[9px]">
        <button type="button" aria-label="新增视图单"><Svg w={7} h={7}><path d="M3.500 0v7M0 3.500h7" stroke="#555" /></Svg></button>
        <div className="flex gap-[13px]">
          <button type="button" aria-label="上一个"><Svg w={5} h={8}><path d="M4.500.8v6.400L.8 4z" stroke="#777" /></Svg></button>
          <button type="button" aria-label="下一个"><Svg w={5} h={8}><path d="M.5.8v6.400L4.200 4z" stroke="#777" /></Svg></button>
        </div>
      </div>
    </div>
  </main>
);

export default function App() {
  return (
    <div className="relative flex h-screen flex-col overflow-hidden bg-white font-['Open_Sans','Noto_Sans_CJK_SC',sans-serif] text-[12px] leading-[18px] text-[#333]">
      <Header />
      <div className="flex min-h-0 flex-1">
        <ToolpathPanel />
        <div className="w-1 shrink-0 bg-[#f5f5f7]" />
        <GraphicsView />
      </div>
      <div className="absolute top-[94px] right-0 h-[119px] w-[3px] overflow-hidden rounded-l bg-[#3f83f8] shadow-[0_0_5px_rgba(0,0,0,.3)]">
        <div className="h-[26px] bg-[#ff7a00]" />
      </div>
    </div>
  );
}
